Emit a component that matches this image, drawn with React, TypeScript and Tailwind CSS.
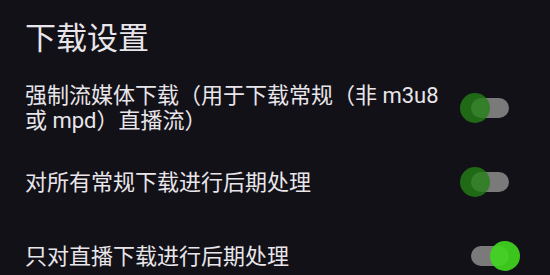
import { useState } from "react";

type Row = { label: string; on: boolean };

const rows: Row[] = [
  { label: "强制流媒体下载（用于下载常规（非 m3u8 或 mpd）直播流）", on: false },
  { label: "对所有常规下载进行后期处理", on: false },
  { label: "只对直播下载进行后期处理", on: true },
];

function Toggle({ on, onClick }: { on: boolean; onClick: () => void }) {
  return (
    <button onClick={onClick} className="relative w-[60px] h-[30px] shrink-0">
      <span className="absolute left-[11px] top-[5px] w-[38px] h-[20px] rounded-full bg-[#7a7a7a]" />
      <span
        className={
          on
            ? "absolute left-[30px] top-0 w-[30px] h-[30px] rounded-full bg-[rgba(64,214,30,0.92)]"
            : "absolute left-0 top-0 w-[30px] h-[30px] rounded-full bg-[rgba(36,128,22,0.8)]"
        }
      />
    </button>
  );
}

export default function App() {
  const [items, setItems] = useState(rows);

  const toggle = (i: number) => {
    setItems(items.map((r, j) => (j === i ? { ...r, on: !r.on } : r)));
  };

  return (
    <div
      className="w-[550px] h-[275px] overflow-hidden bg-[#131118] text-[#e8e6ea]"
      style={{ fontFamily: 'Roboto, "Noto Sans CJK SC", sans-serif' }}
    >
      <h1 className="h-[71px] pt-[19px] pl-[25px] text-[31px] leading-[40px] font-normal">下载设置</h1>
      {items.map((r, i) => (
        <div key={i} className="h-[74px] flex items-center justify-between pl-[25px] pr-[30px]">
          <div className="w-[420px] text-[22px] leading-[25px]">{r.label}</div>
          <Toggle on={r.on} onClick={() => toggle(i)} />
        </div>
      ))}
    </div>
  );
}
